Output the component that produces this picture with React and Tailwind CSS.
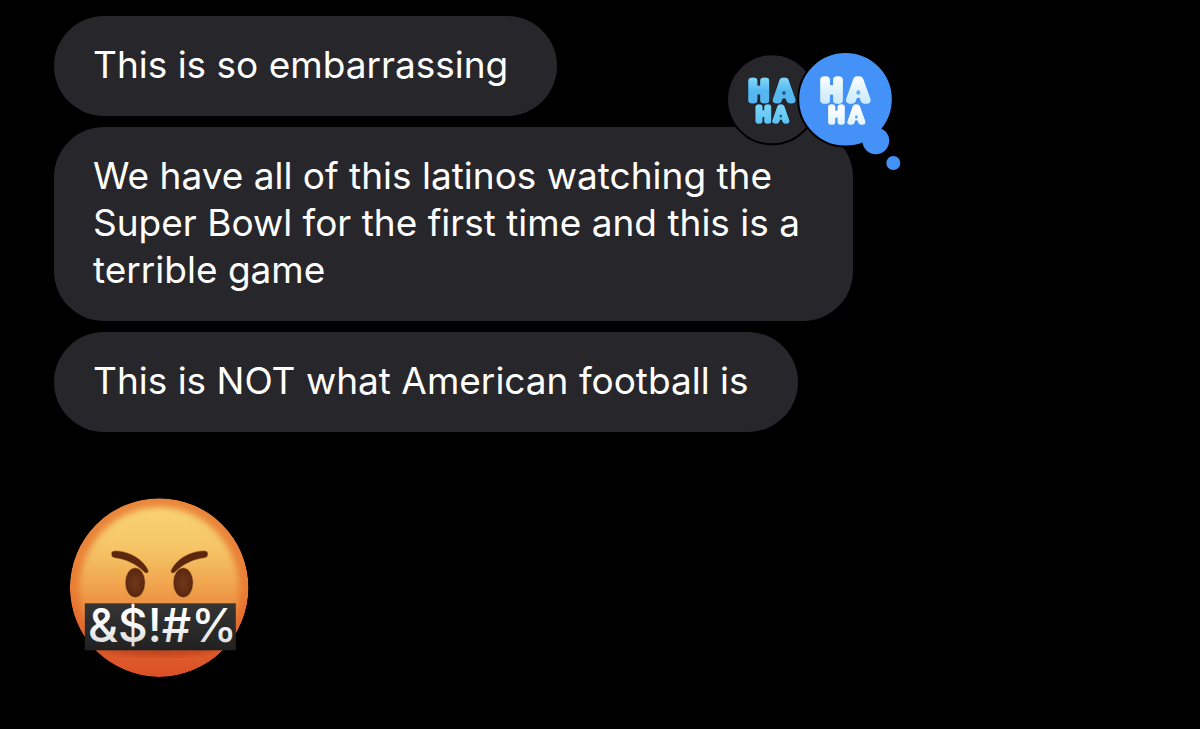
import React from "react";

function Bubble({ children, reaction }) {
  return (
    <li className="relative w-fit max-w-[799px] rounded-[50px] bg-[#27262b] pb-7 pl-[39px] pr-[49px] pt-[25px] text-[37px] leading-[47px] text-white">
      <p>{children}</p>
      {reaction}
    </li>
  );
}

function HaHa({ fill, edge, hole, rows }) {
  return (
    <g
      fill={fill}
      stroke={fill}
      strokeLinejoin="round"
      strokeLinecap="round"
      fontFamily="Inter, sans-serif"
      fontWeight="400"
      style={{ filter: `drop-shadow(0 0 0.6px ${edge})` }}
    >
      {rows.map((row) => (
        <g key={row.y}>
          <text x={`${row.h} ${row.a}`} y={row.y} fontSize={row.size} strokeWidth={row.weight}>
            HA
          </text>
          <ellipse
            cx={row.hole[0]}
            cy={row.hole[1]}
            rx={row.size / 14}
            ry={row.size / 12}
            fill={hole}
            stroke="none"
          />
        </g>
      ))}
    </g>
  );
}

function Tapbacks() {
  return (
    <svg
      viewBox="727 52 174 120"
      className="absolute -right-12 -top-[75px] h-[120px] w-[174px]"
      role="img"
      aria-label="Two laugh reactions"
    >
      <defs>
        <linearGradient id="haBlue" gradientUnits="userSpaceOnUse" x1="0" y1="77" x2="0" y2="124">
          <stop offset="0" stopColor="#86daf9" />
          <stop offset="0.3" stopColor="#54b8f0" />
          <stop offset="0.54" stopColor="#56b6f0" />
          <stop offset="0.62" stopColor="#7ad4f8" />
          <stop offset="1" stopColor="#5cc0f2" />
        </linearGradient>
        <linearGradient id="haWhite" gradientUnits="userSpaceOnUse" x1="0" y1="76" x2="0" y2="125">
          <stop offset="0" stopColor="#ffffff" />
          <stop offset="0.3" stopColor="#def2fd" />
          <stop offset="0.54" stopColor="#cdeafc" />
          <stop offset="0.62" stopColor="#ffffff" />
          <stop offset="1" stopColor="#e0f4fd" />
        </linearGradient>
      </defs>
      <circle cx="772" cy="99.3" r="45" fill="#27262b" stroke="#000" strokeWidth="2" />
      <HaHa
        fill="url(#haBlue)"
        edge="#2a8fd0"
        hole="#245a86"
        rows={[
          { h: 749.5, a: 775.5, y: 99.5, size: 25, weight: 6.5, hole: [784, 93] },
          { h: 756.5, a: 774.5, y: 120.5, size: 18.5, weight: 5, hole: [780.8, 116] },
        ]}
      />
      <circle cx="845.5" cy="99.3" r="47.3" fill="#4491f7" stroke="#000" strokeWidth="2" />
      <circle cx="875.8" cy="140.8" r="13.4" fill="#4491f7" />
      <circle cx="893.3" cy="163" r="7" fill="#4491f7" />
      <HaHa
        fill="url(#haWhite)"
        edge="#9fd4fa"
        hole="#62aaf8"
        rows={[
          { h: 821.5, a: 849, y: 99.5, size: 27, weight: 7, hole: [858.3, 92.5] },
          { h: 829, a: 849.5, y: 122, size: 20, weight: 5, hole: [856.4, 117] },
        ]}
      />
    </svg>
  );
}

function CursingFace() {
  return (
    <svg
      viewBox="69 497 181 181"
      className="h-[181px] w-[181px]"
      role="img"
      aria-label="Face with symbols on mouth"
    >
      <defs>
        <linearGradient id="rim" x1="0" y1="0" x2="0" y2="1">
          <stop offset="0" stopColor="#e9863c" />
          <stop offset="0.5" stopColor="#ea7f35" />
          <stop offset="0.8" stopColor="#e0602c" />
          <stop offset="1" stopColor="#dc5029" />
        </linearGradient>
        <linearGradient id="skin" x1="0" y1="0" x2="0" y2="1">
          <stop offset="0" stopColor="#f8d374" />
          <stop offset="0.25" stopColor="#f5c567" />
          <stop offset="0.48" stopColor="#f0a34c" />
          <stop offset="0.68" stopColor="#ea8039" />
          <stop offset="1" stopColor="#dc5029" stopOpacity="0" />
        </linearGradient>
        <linearGradient id="plate" x1="0" y1="0" x2="0" y2="1">
          <stop offset="0" stopColor="#353535" />
          <stop offset="1" stopColor="#212121" />
        </linearGradient>
        <linearGradient id="symbols" x1="0" y1="0" x2="0" y2="1">
          <stop offset="0.4" stopColor="#ffffff" />
          <stop offset="1" stopColor="#d0d0d4" />
        </linearGradient>
        <radialGradient id="eye">
          <stop offset="0" stopColor="#70371a" />
          <stop offset="1" stopColor="#5b270f" />
        </radialGradient>
        <filter id="soft" x="-10%" y="-10%" width="120%" height="120%">
          <feGaussianBlur stdDeviation="3" />
        </filter>
        <clipPath id="head">
          <circle cx="159.2" cy="587.6" r="89.3" />
        </clipPath>
      </defs>
      <g clipPath="url(#head)">
        <circle cx="159.2" cy="587.6" r="89.3" fill="url(#rim)" />
        <ellipse cx="159.2" cy="590" rx="80" ry="83" fill="url(#skin)" filter="url(#soft)" />
        <ellipse cx="159" cy="648" rx="58" ry="8" fill="#a93416" opacity="0.6" filter="url(#soft)" />
      </g>
      <g stroke="#f6b04f" strokeOpacity="0.5" strokeWidth="1">
        <ellipse cx="135.2" cy="582.7" rx="10" ry="15" fill="url(#eye)" />
        <ellipse cx="183.2" cy="582.7" rx="10" ry="15" fill="url(#eye)" />
        <path
          d="M111.500 555C110.500 551.500 113 550.500 117 550.800C130 551.500 143 559 148.300 570C149.300 573.300 146.500 574 144.500 572.500C136 564 126 559.500 115 558C112.500 557.500 111.800 557 111.500 555Z"
          fill="#5b270f"
        />
        <path
          d="M207.800 555C208.800 551.500 206.300 550.500 202.300 550.800C189.300 551.500 176.300 559 171 570C170 573.300 172.800 574 174.800 572.500C183.300 564 193.300 559.500 204.300 558C206.800 557.500 207.500 557 207.800 555Z"
          fill="#5b270f"
        />
      </g>
      <rect x="84.800" y="603.300" width="151" height="47" fill="url(#plate)" />
      <text
        x="88"
        y="642"
        fill="url(#symbols)"
        fontFamily="Inter, sans-serif"
        fontWeight="500"
        fontSize="46"
      >
        &amp;$!#%
      </text>
    </svg>
  );
}

export default function App() {
  return (
    <main className="min-h-screen bg-black pb-[51px] pl-[54px] pr-4 pt-4 font-[Inter,sans-serif]">
      <ul className="flex flex-col items-start gap-[11px]">
        <Bubble>This is so embarrassing</Bubble>
        <Bubble reaction={<Tapbacks />}>
          We have all of this latinos watching the Super Bowl for the first time and this is a terrible
          game
        </Bubble>
        <Bubble>This is NOT what American football is</Bubble>
        <li className="pl-[15px] pt-[54px]">
          <CursingFace />
        </li>
      </ul>
    </main>
  );
}
